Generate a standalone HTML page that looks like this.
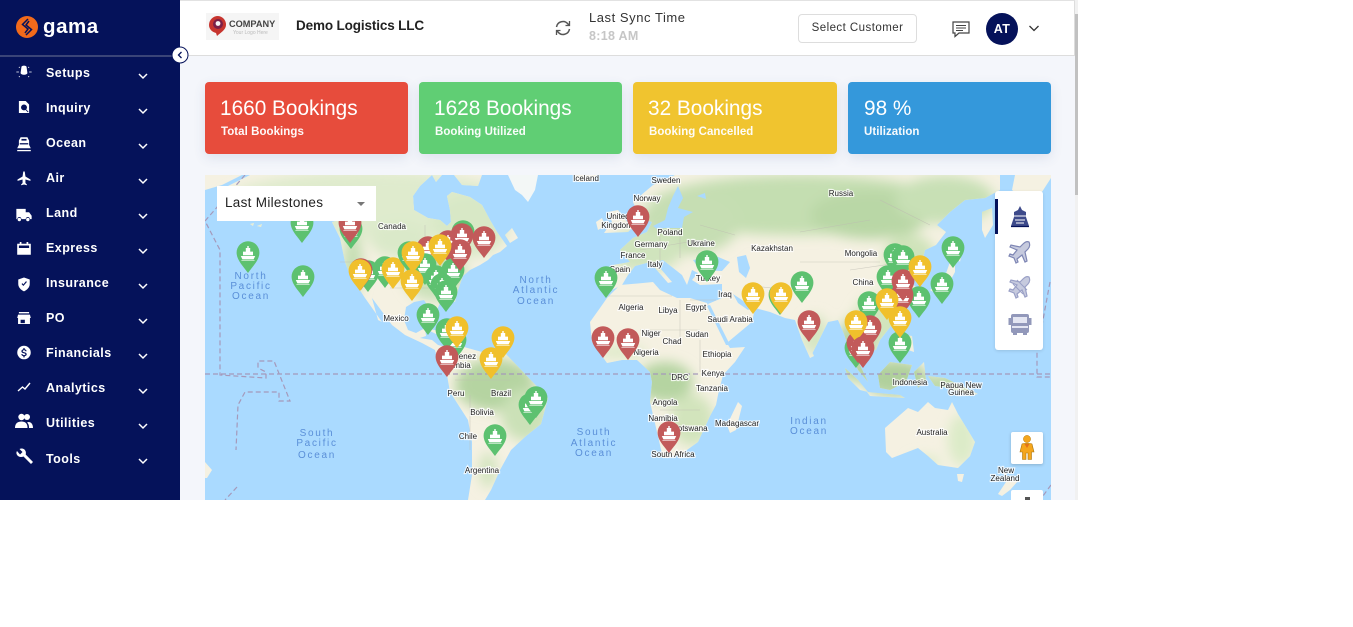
<!DOCTYPE html>
<html><head><meta charset="utf-8"><style>
html,body{margin:0;padding:0;background:#fff;width:1353px;height:627px;overflow:hidden}
body{font-family:"Liberation Sans",sans-serif;position:relative}
.a{position:absolute;white-space:nowrap}
#wrap{position:absolute;left:0;top:0;width:1078px;height:500px;overflow:hidden;background:#f4f6fb}
#side{position:absolute;left:0;top:0;width:180px;height:500px;background:#05125a}
.m{position:absolute;left:46px;color:#fff;font-weight:bold;font-size:12.5px;letter-spacing:.45px;line-height:16px;white-space:nowrap}
.card{position:absolute;top:82px;height:72px;border-radius:4px;box-shadow:0 4px 12px rgba(60,80,140,.12);color:#fff}
.card b{position:absolute;left:15px;top:14px;font-weight:normal;font-size:20.8px;line-height:26px;letter-spacing:0;white-space:nowrap}
.card i{position:absolute;left:16px;top:43px;font-style:normal;font-size:11.5px;line-height:14px;font-weight:bold;letter-spacing:.05px;opacity:.96;white-space:nowrap}
svg text{font-family:"Liberation Sans",sans-serif}
.l{font-size:8px;fill:#222;stroke:#fff;stroke-width:2.2px;paint-order:stroke;stroke-opacity:.8;text-anchor:middle}
.o{font-size:10px;fill:#5a8fd8;letter-spacing:1.7px;text-anchor:middle}
</style></head><body>
<div id="wrap">
<!-- header -->
<div class="a" style="left:180px;top:0;width:895px;height:56px;background:#fff;border-top:1px solid #e2e2e2;border-bottom:1px solid #ddd;box-sizing:border-box;border-right:1px solid #ddd"></div>

<!-- map -->
<svg class="a" style="left:205px;top:175px" width="846" height="325" viewBox="205 175 846 325" xmlns="http://www.w3.org/2000/svg">
<defs>
<filter id="b" x="-30%" y="-30%" width="160%" height="160%"><feGaussianBlur stdDeviation="6"/></filter>
<path id="land" d="M205,175H242L222,185L205,190Z
M228,186L250,175H432L420,186L413,196L414,210L428,218L440,220L447,226L451,222L450,210L447,196L452,192L470,197L482,205L490,220L497,232L507,246L500,252L493,255L488,260L480,265L470,270L463,276L458,290L455,302L450,300L442,298L437,310L433,318L428,306L424,300L414,302L406,307L404,320L408,330L416,333L425,328L426,336L420,338L432,340L438,345L450,348L464,347L482,352L505,353L525,374L548,398L541,424L526,436L511,450L500,470L491,490L485,500H468L472,475L472,442L468,420L450,392L447,375L438,362L435,350L422,343L405,335L392,325L372,298L378,320L382,322L365,298L350,275L345,262L340,238L332,222L376,210L250,210Z
M432,175H442L436,182Z
M454,175H482L478,186L462,185Z
M250,224L254,223L253,226Z M257,226L262,224L261,227Z
M592,342L590,322L600,308L607,298L620,285L643,283L653,282L660,290L677,298L690,298L707,303L714,320L722,335L730,348L745,347L735,362L723,375L718,395L716,405L710,416L698,442L680,455L663,458L657,432L650,402L652,382L650,372L637,360L622,360L607,363Z
M600,285L600,275L613,265L630,262L620,250L633,238L647,232L652,222L640,218L633,202L653,185L675,175H1000L1000,190L985,198L965,200L950,212L937,225L946,232L936,245L925,250L922,262L928,275L922,282L915,272L908,276L916,288L906,308L894,322L880,340L876,350L868,352L864,342L858,345L860,365L868,382L858,370L850,352L844,334L838,320L828,322L820,338L810,358L802,340L795,320L785,318L770,312L755,308L752,322L728,342L718,322L708,304L722,298L722,284L700,285L692,280L698,273L692,270L687,285L682,275L663,260L655,262L660,268L672,282L668,283L655,268L650,262L635,266L628,275L622,285L612,290Z
M1015,175H1051V178L1040,195L1025,200L1012,190Z
M604,233L612,222L608,212L618,210L632,228L628,232Z
M596,222L602,218L605,226L598,230Z
M575,175H597L590,182L578,182Z
M982,212L992,208L993,225L985,238L982,230Z
M845,368L858,380L868,392L860,390L848,378Z
M878,375L890,362L912,365L906,382L890,390L880,388Z
M867,392L900,395L905,398L870,396Z
M914,372L924,362L926,380L918,388Z
M928,376L945,378L978,394L970,396L950,388L935,386Z
M905,335L912,336L914,352L908,350Z
M930,290L943,282L950,262L955,258L955,272L948,285L935,293Z
M955,255L962,252L960,262Z
M885,428L908,408L918,412L928,402L935,408L948,410L952,402L958,414L975,442L970,456L958,468L938,465L928,456L918,448L892,458L886,452Z
M957,474L964,474L962,482L958,481Z
M1003,470L1008,478L1018,481L1010,490L1002,496L998,494L1006,482Z
M727,425L738,402L742,406L736,430L730,433Z
M810,358L812,352L814,356Z
M205,462L212,470L207,478L205,478Z
M424,328L445,332L436,334Z
M446,340L462,342L452,343Z
M505,235L512,228L518,238L510,243Z"/>
<path id="water" d="M737,257L746,255L750,268L746,278L739,272Z M693,260L716,256L730,262L722,271L700,270Z M702,245L706,243L708,247Z
M707,306L710,305L730,345L726,345Z M733,294L742,300L752,308L748,310L738,303Z
M653,226L665,220L668,208L673,196L678,186L683,198L678,208L693,212L684,217L682,228L665,228L657,229Z M697,196L705,193L706,199Z
M340,218L342,216L344,218Z M495,175H506V182L498,182Z"/>
<clipPath id="c"><use href="#land"/></clipPath>
<g id="ship" fill="#fff"><path d="M-7.2,-17H7.2L5.6,-13.6H-5.6Z"/><path d="M-5,-17.8V-21.4H-2.2V-25H-.7V-27H.7V-25H2.2V-21.4H5V-17.8Z"/><rect x="-6.6" y="-12.8" width="13.2" height=".7" opacity=".8"/></g>
<path id="pin" d="M0,0C-5,-7 -11.4,-13 -11.4,-20.4A11.4,11.4 0 1 1 11.4,-20.4C11.4,-13 5,-7 0,0Z"/>
<g id="R"><use href="#pin" fill="#c25a5a"/><use href="#ship"/></g>
<g id="G"><use href="#pin" fill="#5dc170"/><use href="#ship"/></g>
<g id="Y"><use href="#pin" fill="#f0c02c"/><use href="#ship"/></g>
</defs>
<rect x="205" y="175" width="846" height="325" fill="#aadaff"/>
<path d="M508,175H538L535,190L528,202L522,195L515,190Z" fill="#f3f7f6"/>
<use href="#land" fill="#f5f1e2"/>
<g clip-path="url(#c)"><g filter="url(#b)">
<ellipse cx="370" cy="205" rx="150" ry="34" fill="#dfebcd"/>
<ellipse cx="470" cy="225" rx="38" ry="32" fill="#d8e8c6"/>
<ellipse cx="400" cy="240" rx="30" ry="18" fill="#dae9c9"/>
<ellipse cx="435" cy="275" rx="32" ry="26" fill="#cbe1b9"/>
<ellipse cx="353" cy="265" rx="10" ry="32" fill="#c5deb3"/>
<ellipse cx="495" cy="385" rx="40" ry="26" fill="#b5d4a1"/>
<ellipse cx="525" cy="415" rx="24" ry="26" fill="#cbe1b7"/>
<ellipse cx="488" cy="470" rx="9" ry="18" fill="#d3e5bf"/>
<ellipse cx="665" cy="382" rx="28" ry="20" fill="#b5d4a1"/>
<ellipse cx="692" cy="420" rx="22" ry="26" fill="#d2e4bc"/>
<ellipse cx="620" cy="352" rx="26" ry="6" fill="#dbe9c6"/>
<ellipse cx="800" cy="205" rx="150" ry="30" fill="#c4deb1"/>
<ellipse cx="870" cy="215" rx="60" ry="24" fill="#b9d7a6"/>
<ellipse cx="945" cy="200" rx="50" ry="24" fill="#c8e0b5"/>
<ellipse cx="690" cy="222" rx="50" ry="32" fill="#c6deb3"/>
<ellipse cx="645" cy="250" rx="38" ry="22" fill="#d0e4bd"/>
<ellipse cx="910" cy="258" rx="26" ry="24" fill="#cfe3ba"/>
<ellipse cx="885" cy="320" rx="32" ry="26" fill="#d2e5bd"/>
<ellipse cx="855" cy="350" rx="20" ry="32" fill="#b9d7a6"/>
<ellipse cx="895" cy="378" rx="32" ry="18" fill="#b0d09c"/>
<ellipse cx="950" cy="385" rx="28" ry="11" fill="#b9d7a6"/>
<ellipse cx="815" cy="335" rx="14" ry="20" fill="#d6e6c2"/>
<ellipse cx="962" cy="440" rx="14" ry="26" fill="#dcebc8"/>
<ellipse cx="925" cy="462" rx="16" ry="6" fill="#dcebc8"/>
</g></g>
<use href="#water" fill="#aadaff"/>
<path d="M606,296H672M690,300H716M640,330H700M680,300V340M700,340V372M660,410H700M390,288H450M425,225V262M340,262H440M800,262H880M470,395V450M455,380H510M745,285L790,290M850,270L905,262M640,250L700,240M660,232V262M680,232V258M700,225L735,235M880,200L930,225M800,232L870,220" stroke="#bdbab2" stroke-width=".6" fill="none" opacity=".7"/>
<g fill="none" stroke="#a599ba" stroke-width="1.2" stroke-dasharray="5 3">
<path d="M205,374H1051"/>
<path d="M245,175L205,221L220,250V375L266,378V372L258,368V361L274,361L290,401H279V392L245,392L238,405L236,450"/>
<path d="M237,487L225,500"/>
<path d="M1050,282L1037,352V377H1051"/>
<path d="M1051,485L1040,500"/>
</g>
<g class="lb">
<text class="o" x="251" y="279">North</text><text class="o" x="251" y="289">Pacific</text><text class="o" x="251" y="299">Ocean</text>
<text class="o" x="317" y="436">South</text><text class="o" x="317" y="446">Pacific</text><text class="o" x="317" y="458">Ocean</text>
<text class="o" x="536" y="283">North</text><text class="o" x="536" y="293">Atlantic</text><text class="o" x="536" y="304">Ocean</text>
<text class="o" x="594" y="435">South</text><text class="o" x="594" y="446">Atlantic</text><text class="o" x="594" y="456">Ocean</text>
<text class="o" x="809" y="424">Indian</text><text class="o" x="809" y="434">Ocean</text>
<text class="l" x="392" y="229">Canada</text><text class="l" x="396" y="321">Mexico</text>
<text class="l" x="465" y="359">Venez</text><text class="l" x="462" y="368">mbia</text>
<text class="l" x="456" y="396">Peru</text><text class="l" x="501" y="396">Brazil</text><text class="l" x="482" y="415">Bolivia</text>
<text class="l" x="468" y="439">Chile</text><text class="l" x="482" y="473">Argentina</text>
<text class="l" x="586" y="181">Iceland</text><text class="l" x="666" y="183">Sweden</text><text class="l" x="647" y="201">Norway</text>
<text class="l" x="618" y="219">United</text><text class="l" x="617" y="228">Kingdom</text>
<text class="l" x="670" y="235">Poland</text><text class="l" x="651" y="247">Germany</text><text class="l" x="701" y="246">Ukraine</text>
<text class="l" x="633" y="258">France</text><text class="l" x="620" y="272">Spain</text><text class="l" x="655" y="267">Italy</text>
<text class="l" x="708" y="281">Turkey</text><text class="l" x="725" y="297">Iraq</text><text class="l" x="631" y="310">Algeria</text>
<text class="l" x="668" y="313">Libya</text><text class="l" x="696" y="310">Egypt</text><text class="l" x="730" y="322">Saudi Arabia</text>
<text class="l" x="651" y="336">Niger</text><text class="l" x="672" y="344">Chad</text><text class="l" x="697" y="337">Sudan</text>
<text class="l" x="646" y="355">Nigeria</text><text class="l" x="717" y="357">Ethiopia</text><text class="l" x="713" y="376">Kenya</text>
<text class="l" x="680" y="380">DRC</text><text class="l" x="712" y="391">Tanzania</text><text class="l" x="665" y="405">Angola</text>
<text class="l" x="663" y="421">Namibia</text><text class="l" x="690" y="431">Botswana</text><text class="l" x="737" y="426">Madagascar</text>
<text class="l" x="673" y="457">South Africa</text><text class="l" x="772" y="251">Kazakhstan</text>
<text class="l" x="841" y="196">Russia</text><text class="l" x="861" y="256">Mongolia</text><text class="l" x="863" y="285">China</text>
<text class="l" x="910" y="385">Indonesia</text>
<text class="l" x="961" y="388">Papua New</text><text class="l" x="961" y="395">Guinea</text>
<text class="l" x="932" y="435">Australia</text><text class="l" x="1006" y="473">New</text><text class="l" x="1005" y="481">Zealand</text>
</g>
<g>
<use href="#G" x="248" y="273"/><use href="#G" x="302" y="243"/><use href="#G" x="303" y="297"/>
<use href="#G" x="351" y="249"/><use href="#R" x="350" y="243"/>
<use href="#G" x="368" y="292"/><use href="#G" x="385" y="288"/>
<use href="#R" x="361" y="290"/><use href="#Y" x="360" y="291"/><use href="#Y" x="393" y="289"/>
<use href="#G" x="409" y="273"/><use href="#R" x="428" y="268"/><use href="#G" x="425" y="285"/>
<use href="#R" x="448" y="262"/><use href="#G" x="463" y="252"/><use href="#R" x="462" y="255"/>
<use href="#G" x="453" y="290"/><use href="#R" x="460" y="271"/><use href="#G" x="436" y="297"/>
<use href="#G" x="442" y="305"/><use href="#G" x="446" y="312"/>
<use href="#Y" x="413" y="273"/><use href="#Y" x="412" y="301"/><use href="#Y" x="440" y="266"/>
<use href="#R" x="484" y="258"/>
<use href="#G" x="428" y="335"/><use href="#G" x="455" y="360"/><use href="#G" x="447" y="350"/><use href="#Y" x="457" y="348"/>
<use href="#Y" x="503" y="358"/><use href="#Y" x="491" y="379"/><use href="#R" x="447" y="377"/>
<use href="#G" x="495" y="456"/><use href="#G" x="530" y="425"/><use href="#G" x="536" y="418"/>
<use href="#R" x="638" y="237"/><use href="#G" x="606" y="298"/><use href="#G" x="707" y="282"/>
<use href="#Y" x="753" y="314"/><use href="#G" x="780" y="315"/><use href="#Y" x="781" y="314"/>
<use href="#R" x="603" y="358"/><use href="#R" x="628" y="360"/><use href="#R" x="669" y="453"/>
<use href="#G" x="802" y="303"/><use href="#R" x="809" y="342"/><use href="#G" x="953" y="268"/>
<use href="#G" x="895" y="275"/><use href="#G" x="903" y="277"/><use href="#G" x="888" y="297"/>
<use href="#G" x="942" y="304"/><use href="#G" x="919" y="318"/><use href="#R" x="902" y="315"/>
<use href="#R" x="903" y="301"/><use href="#Y" x="920" y="287"/>
<use href="#G" x="869" y="323"/><use href="#Y" x="887" y="320"/><use href="#G" x="900" y="363"/><use href="#Y" x="900" y="338"/>
<use href="#G" x="856" y="368"/><use href="#R" x="870" y="347"/><use href="#R" x="858" y="363"/><use href="#Y" x="856" y="342"/><use href="#R" x="863" y="368"/>
</g>
</svg>

<!-- dropdown -->
<div class="a" style="left:217px;top:186px;width:159px;height:35px;background:#fff"></div>
<div class="a" style="left:225px;top:195px;font-size:13.5px;line-height:16px;color:#222;letter-spacing:.3px">Last Milestones</div>
<div class="a" style="left:357px;top:202px;width:0;height:0;border-left:4px solid transparent;border-right:4px solid transparent;border-top:4px solid #777"></div>

<!-- right panel -->
<div class="a" style="left:995px;top:191px;width:48px;height:159px;background:#fff;border-radius:3px;box-shadow:0 1px 3px rgba(0,0,0,.12)"></div>
<div class="a" style="left:995px;top:199px;width:3px;height:35px;background:#05125a"></div>
<svg class="a" style="left:1005px;top:202px" width="30" height="30" viewBox="0 0 30 30"><path d="M6,24L9,15V10L13,8L15,4L17,8L21,10V15L24,24Z" fill="#3d4a8a"/><path d="M9,14H21M10,18H20M11,21H19" stroke="#fff" stroke-width="1"/><path d="M6,24.5H24" stroke="#05125a" stroke-width="1.2"/></svg>
<svg class="a" style="left:1005px;top:237px" width="30" height="30" viewBox="0 0 30 30"><path d="M24,5C22,4 20,5 18,7L15,10L6,8L5,10L12,13L8,18L5,17L4,19L9,21L11,26L13,25L12,22L17,18L20,25L22,24L20,15L23,12C25,10 25,7 24,5Z" fill="#c6cade" stroke="#7e86b4" stroke-width="1.2"/></svg>
<svg class="a" style="left:1005px;top:272px" width="30" height="30" viewBox="0 0 30 30"><path d="M24,5C22,4 20,5 18,7L15,10L6,8L5,10L12,13L8,18L5,17L4,19L9,21L11,26L13,25L12,22L17,18L20,25L22,24L20,15L23,12C25,10 25,7 24,5Z" fill="#c6cade" stroke="#9aa0c6" stroke-width="1.2"/><path d="M8,12L18,22M12,8L22,18" stroke="#9aa0c6" stroke-width="1"/></svg>
<svg class="a" style="left:1005px;top:309px" width="30" height="30" viewBox="0 0 30 30"><rect x="6" y="5" width="18" height="19" rx="2" fill="#9298ba"/><rect x="8" y="8" width="14" height="6" fill="#e4e6f2"/><rect x="7" y="17" width="16" height="2" fill="#e4e6f2"/><rect x="3.500" y="9" width="2.500" height="7" fill="#9298ba"/><rect x="24" y="9" width="2.500" height="7" fill="#9298ba"/><rect x="8" y="24" width="4" height="2" fill="#9298ba"/><rect x="18" y="24" width="4" height="2" fill="#9298ba"/></svg>

<!-- pegman -->
<div class="a" style="left:1011px;top:432px;width:32px;height:32px;background:#fff;border-radius:2px;box-shadow:0 1px 3px rgba(0,0,0,.2)"></div>
<svg class="a" style="left:1017px;top:435px" width="20" height="26" viewBox="0 0 20 26"><circle cx="10" cy="4" r="3.600" fill="#f5a61d" stroke="#b87d10" stroke-width=".5"/><path d="M5,9C6,8 14,8 15,9L17,17H14.500V24.500H11V18H9V24.500H5.500V17H3Z" fill="#f5a61d" stroke="#a87510" stroke-width=".6"/><path d="M7.500,9L10,13L12.500,9Z" fill="#e2731a"/></svg>
<div class="a" style="left:1011px;top:490px;width:32px;height:20px;background:#fff;border-radius:2px"></div>
<div class="a" style="left:1025px;top:497px;width:5px;height:3px;background:#555"></div>

<!-- cards -->
<div class="card" style="left:205px;width:203px;background:#e74c3c"><b>1660 Bookings</b><i>Total Bookings</i></div>
<div class="card" style="left:419px;width:203px;background:#60ce74"><b>1628 Bookings</b><i>Booking Utilized</i></div>
<div class="card" style="left:633px;width:204px;background:#f0c42f"><b>32 Bookings</b><i>Booking Cancelled</i></div>
<div class="card" style="left:848px;width:203px;background:#3498db"><b style="left:16px">98 %</b><i>Utilization</i></div>

<!-- header content -->
<div class="a" style="left:206px;top:13px;width:73px;height:27px;background:#f5f5f5"></div>
<svg class="a" style="left:208px;top:15px" width="20" height="22" viewBox="0 0 20 22"><path d="M10,1A8.500,8.500 0 0 1 18,10C18,15 12,18 9,21L8,18C4,17 1,14 1,10A9,9 0 0 1 10,1Z" fill="#c7352f"/><circle cx="10" cy="9" r="5" fill="#7a2048"/><circle cx="10" cy="8.500" r="2.400" fill="#f5f5f5"/></svg>
<div class="a" style="left:229px;top:19px;font-size:9.2px;line-height:11px;font-weight:bold;color:#444">COMPANY</div>
<div class="a" style="left:233px;top:30px;font-size:5px;line-height:6px;color:#bbb">Your Logo Here</div>
<div class="a" style="left:296px;top:17px;font-size:13.5px;line-height:17px;font-weight:bold;color:#222;letter-spacing:-.14px">Demo Logistics LLC</div>
<svg class="a" style="left:554px;top:19px" width="18" height="18" viewBox="0 0 18 18" fill="none" stroke="#555" stroke-width="1.500"><path d="M2.500,8A6.500,6.500 0 0 1 14,5L15.500,6.500"/><path d="M15.500,2V6.500H11.500" stroke-width="1.300"/><path d="M15.500,10A6.500,6.500 0 0 1 4,13L2.500,11.500"/><path d="M2.500,16V11.500H6.500" stroke-width="1.300"/></svg>
<div class="a" style="left:589px;top:10px;font-size:13px;line-height:16px;color:#333;letter-spacing:.55px">Last Sync Time</div>
<div class="a" style="left:589px;top:29px;font-size:12.5px;line-height:15px;color:#c6c6c6;font-weight:bold;letter-spacing:.3px">8:18 AM</div>
<div class="a" style="left:798px;top:14px;width:119px;height:29px;box-sizing:border-box;border:1px solid #ddd;border-radius:4px;background:#fff;font-size:11.5px;line-height:27px;text-align:center;color:#333;letter-spacing:.45px">Select Customer</div>
<svg class="a" style="left:951px;top:19px" width="20" height="20" viewBox="0 0 20 20" fill="none" stroke="#444" stroke-width="1.200"><path d="M2,3H18V14H8L4,17.500V14H2Z"/><path d="M5,6.500H15M5,9H15M5,11.500H12" stroke-width=".9"/></svg>
<div class="a" style="left:986px;top:13px;width:32px;height:32px;border-radius:50%;background:#05125a;color:#fff;font-size:12.5px;font-weight:bold;line-height:32px;text-align:center;letter-spacing:.4px">AT</div>
<svg class="a" style="left:1028px;top:24px" width="12" height="9" viewBox="0 0 12 9" fill="none" stroke="#333" stroke-width="1.300"><path d="M1.500,2L6,6.500L10.500,2"/></svg>

<!-- sidebar -->
<div id="side">
<div class="a" style="left:0;top:55px;width:180px;height:2px;background:#3a4478"></div>
<svg class="a" style="left:15px;top:15px" width="25" height="25" viewBox="0 0 25 25"><circle cx="12" cy="12" r="11" fill="#f26a1b"/><path d="M13,4L7.500,9.500L13,14L10,18M11,20L16.500,14.500L11,10L14,6" fill="none" stroke="#05125a" stroke-width="1.500"/></svg>
<div class="a" style="left:43px;top:14px;font-size:20.5px;line-height:26px;font-weight:bold;color:#fff;letter-spacing:.55px">gama</div>

<div class="m" style="top:65px">Setups</div>
<div class="m" style="top:100px">Inquiry</div>
<div class="m" style="top:135px">Ocean</div>
<div class="m" style="top:170px">Air</div>
<div class="m" style="top:205px">Land</div>
<div class="m" style="top:240px">Express</div>
<div class="m" style="top:275px">Insurance</div>
<div class="m" style="top:310px">PO</div>
<div class="m" style="top:345px">Financials</div>
<div class="m" style="top:380px">Analytics</div>
<div class="m" style="top:415px">Utilities</div>
<div class="m" style="top:451px">Tools</div>

<svg class="a" style="left:136px;top:71px" width="14" height="400" viewBox="0 0 14 400" fill="none" stroke="#fff" stroke-width="1.500"><path d="M3,3L7,7L11,3M3,38L7,42L11,38M3,73L7,77L11,73M3,108L7,112L11,108M3,143L7,147L11,143M3,178L7,182L11,178M3,213L7,217L11,213M3,248L7,252L11,248M3,283L7,287L11,283M3,318L7,322L11,318M3,353L7,357L11,353M3,388L7,392L11,388"/></svg>

<svg class="a" style="left:13px;top:62px" width="22" height="410" viewBox="0 0 22 410" fill="#fff">
<g transform="translate(11,10) scale(.85) translate(-11,-10)"><path d="M8,4C8,2 14,2 14,4L15,11C15,14 7,14 7,11Z"/><path d="M2,10H5M17,10H20M5,4L6,5M17,4L16,5M5,16L6,15M17,16L16,15" stroke="#fff" fill="none"/></g>
<g transform="translate(11,45) scale(.85) translate(-11,-45)"><path fill-rule="evenodd" d="M5,38H13L17,42V52H5ZM11,42A3.500,3.500 0 1 0 11,49A3.500,3.500 0 1 0 11,42Z"/><path d="M13,48L16,51" stroke="#05125a" stroke-width="1"/></g>
<g transform="translate(11,82) scale(.85) translate(-11,-82)"><path d="M7,74H15L17,78V83L19,87H3L5,83V78Z"/><rect x="8" y="76" width="6" height="2" fill="#05125a"/><rect x="6" y="81" width="10" height="1.500" fill="#05125a"/><path d="M3,89H19V90.500H3Z"/></g>
<g transform="translate(11,116) scale(.72) translate(-11,-116)"><path d="M10,107H12L13,114L20,118V120L13,118V123L15,125V126L11,125L7,126V125L9,123V118L2,120V118L9,114Z"/></g>
<g transform="translate(11,152) scale(.85) translate(-11,-152)"><path d="M2,146H13V150H17L20,154V158H18A2.500,2.500 0 0 0 13,158H8A2.500,2.500 0 0 0 3,158H2Z"/><circle cx="5.500" cy="158.500" r="2"/><circle cx="15.500" cy="158.500" r="2"/></g>
<g transform="translate(11,186) scale(.85) translate(-11,-186)"><path fill-rule="evenodd" d="M3,181H6V179H8V181H14V179H16V181H19V194H3ZM5,183V186H17V183Z"/></g>
<g transform="translate(11,222) scale(.82) translate(-11,-222)"><path fill-rule="evenodd" d="M11,214L18,216.500V222C18,226 15,229 11,231C7,229 4,226 4,222V216.500ZM8,222L10.200,224.500L14.500,219.500L13.500,218.500L10.200,222.500L9,221Z"/></g>
<g transform="translate(11,256) scale(.85) translate(-11,-256)"><path fill-rule="evenodd" d="M5,249H17V250.500H5ZM4,252H18L19,256H18V263H4V256H3ZM7,258V262H12V258Z"/></g>
<g transform="translate(11,291) scale(.9) translate(-11,-291)"><path fill-rule="evenodd" d="M11,283A7.500,7.500 0 1 0 11,298A7.500,7.500 0 1 0 11,283ZM10.300,285.500H11.700V286.800C13,287 13.800,287.800 13.900,289H12.500C12.400,288.300 11.800,288 11,288C10.200,288 9.600,288.300 9.600,289C9.600,289.600 10,289.800 11.300,290.100C13,290.500 14,291 14,292.400C14,293.700 13,294.300 11.700,294.500V295.800H10.300V294.500C9,294.200 8.100,293.500 8,292.200H9.400C9.500,293 10.100,293.300 11,293.300C12,293.300 12.500,292.900 12.500,292.400C12.500,291.800 12.100,291.600 10.800,291.300C9.200,290.900 8.100,290.400 8.100,289C8.100,287.900 9,287.100 10.300,286.800Z"/></g>
<path d="M5,329L9.500,325L12,327L17,321" fill="none" stroke="#fff" stroke-width="1.400"/>
<circle cx="8.500" cy="355" r="3.200"/><circle cx="14" cy="355" r="3"/><path d="M2,366C2,361 5,359.500 8.500,359.500C12,359.500 14.500,361 14.500,366Z"/><path d="M15.500,360C18,360 20,362 20,366H16C16,364 15.800,362 14,360.500Z"/>
<path d="M4,389L7,392.500L9.500,390L6.500,387C8.500,386 11.500,386.500 12.500,389C13,390 13,391.500 12.700,392.500L20,400L18,402L10.500,394.500C8,395.500 5,395 3.800,392.500C3.200,391.500 3.300,390 4,389Z"/>
</svg>
</div>
<!-- collapse -->
<svg class="a" style="left:171px;top:46px" width="18" height="18" viewBox="0 0 18 18"><circle cx="9" cy="9" r="8" fill="#fff" stroke="#05125a" stroke-width="1"/><path d="M10.500,6L7.500,9L10.500,12" fill="none" stroke="#05125a" stroke-width="1.300"/></svg>
<!-- scrollbar -->
<div class="a" style="left:1075px;top:0;width:3px;height:500px;background:#f1f1f1"></div>
<div class="a" style="left:1075px;top:14px;width:3px;height:181px;background:#c1c1c1"></div>
</div>
</body></html>
